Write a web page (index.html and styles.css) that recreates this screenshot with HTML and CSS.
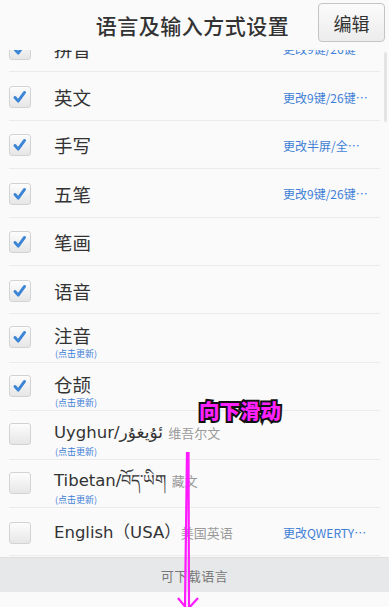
FILE: index.html
```html
<!DOCTYPE html>
<html lang="zh">
<head>
<meta charset="utf-8">
<link rel="stylesheet" href="styles.css">
</head>
<body>
<div class="page">
  <header class="topbar">
    <span></span>
    <h1 class="title">语言及输入方式设置</h1>
    <button class="edit-btn">编辑</button>
  </header>
  <div class="list">
    <div class="row first">
      <span class="cb checked"><svg viewBox="0 0 22 22"><path d="M5.5 11.5 L9 15.5 L16 6" /></svg></span>
      <div class="label"><div class="main">拼音</div></div>
      <span class="action">更改9键/26键…</span>
    </div>
    <div class="row">
      <span class="cb checked"><svg viewBox="0 0 22 22"><path d="M5.5 11.5 L9 15.5 L16 6" /></svg></span>
      <div class="label"><div class="main">英文</div></div>
      <span class="action">更改9键/26键…</span>
    </div>
    <div class="row">
      <span class="cb checked"><svg viewBox="0 0 22 22"><path d="M5.5 11.5 L9 15.5 L16 6" /></svg></span>
      <div class="label"><div class="main">手写</div></div>
      <span class="action">更改半屏/全…</span>
    </div>
    <div class="row">
      <span class="cb checked"><svg viewBox="0 0 22 22"><path d="M5.5 11.5 L9 15.5 L16 6" /></svg></span>
      <div class="label"><div class="main">五笔</div></div>
      <span class="action">更改9键/26键…</span>
    </div>
    <div class="row">
      <span class="cb checked"><svg viewBox="0 0 22 22"><path d="M5.5 11.5 L9 15.5 L16 6" /></svg></span>
      <div class="label"><div class="main">笔画</div></div>
    </div>
    <div class="row">
      <span class="cb checked"><svg viewBox="0 0 22 22"><path d="M5.5 11.5 L9 15.5 L16 6" /></svg></span>
      <div class="label"><div class="main">语音</div></div>
    </div>
    <div class="row sub">
      <span class="cb checked"><svg viewBox="0 0 22 22"><path d="M5.5 11.5 L9 15.5 L16 6" /></svg></span>
      <div class="label"><div class="main">注音</div><div class="note">(点击更新)</div></div>
    </div>
    <div class="row sub">
      <span class="cb checked"><svg viewBox="0 0 22 22"><path d="M5.5 11.5 L9 15.5 L16 6" /></svg></span>
      <div class="label"><div class="main">仓颉</div><div class="note">(点击更新)</div></div>
    </div>
    <div class="row sub">
      <span class="cb"></span>
      <div class="label"><div class="main latin">Uyghur/<span class="ar">ئۇيغۇر</span> <span class="gray">维吾尔文</span></div><div class="note">(点击更新)</div></div>
    </div>
    <div class="row sub">
      <span class="cb"></span>
      <div class="label"><div class="main latin">Tibetan/<span class="tb">བོད་ཡིག</span> <span class="gray">藏文</span></div><div class="note">(点击更新)</div></div>
    </div>
    <div class="row">
      <span class="cb"></span>
      <div class="label"><div class="main latin">English（USA）<span class="gray">美国英语</span></div></div>
      <span class="action">更改QWERTY…</span>
    </div>
    <div class="band">可下载语言</div>
    <div class="row last"></div>
  </div>
  <div class="scrollbar"></div>
  <div class="hint">向下滑动</div>
  <svg class="arrow" viewBox="0 0 40 170" width="40" height="170">
    <path d="M20 10 L18 165 M21.5 10 L22 165 M11 156 L20 167 M31 156 L21 167" />
  </svg>
</div>
</body>
</html>
```

FILE: styles.css
```css
* { box-sizing: border-box; }
html, body { margin: 0; padding: 0; }
body {
  width: 389px;
  height: 607px;
  overflow: hidden;
  background: #fafafa;
  font-family: "Noto Sans CJK SC", "Noto Sans", sans-serif;
  color: #333;
}
.page {
  position: relative;
  width: 389px;
  height: 607px;
  overflow: hidden;
}
.topbar {
  position: relative;
  z-index: 2;
  height: 50px;
  display: grid;
  grid-template-columns: 1fr auto 1fr;
  align-items: center;
  background: #fafafa;
  padding-right: 4px;
}
.title {
  margin: 0;
  font-size: 21px;
  font-weight: 500;
  color: #333;
  letter-spacing: 0.5px;
}
.edit-btn {
  justify-self: end;
  width: 67px;
  height: 39px;
  margin-top: -5px;
  border: 1px solid #c4c4c4;
  border-radius: 4px;
  background: linear-gradient(#fbfbfb, #ececec);
  font-family: inherit;
  font-size: 18px;
  color: #333;
  padding: 0;
}
.list {
  position: relative;
  z-index: 1;
}
.row {
  height: 48.4px;
  display: flex;
  align-items: center;
  padding-left: 9px;
  padding-right: 12px;
  border-bottom: 1px solid transparent;
  background-image: linear-gradient(#ebebeb, #ebebeb);
  background-repeat: no-repeat;
  background-size: 371px 1px;
  background-position: 9px 100%;
}
.row.first { margin-top: -25px; }
.row.sub { align-items: flex-start; padding-top: 11px; }
.cb {
  flex: none;
  width: 22px;
  height: 22px;
  border: 1px solid #d3d3d3;
  border-radius: 3px;
  background: linear-gradient(#fdfdfd, #e6e6e6);
  display: flex;
  align-items: center;
  justify-content: center;
}
.cb svg { width: 20px; height: 20px; display: none; }
.cb.checked svg { display: block; }
.cb path {
  fill: none;
  stroke: #3b84d6;
  stroke-width: 3.2;
  stroke-linecap: round;
  stroke-linejoin: round;
}
.label {
  flex: 1;
  margin-left: 23px;
  min-width: 0;
}
.main {
  font-size: 18.5px;
  line-height: 20px;
  color: #333;
  white-space: nowrap;
}
.row.sub .main { line-height: 18px; }
.main.latin {
  font-family: "DejaVu Sans", "Noto Sans CJK SC", sans-serif;
  font-size: 16.5px;
}
.ar { font-family: "DejaVu Sans", sans-serif; font-size: 17px; }
.tb { font-size: 16px; }
.gray {
  font-family: "Noto Sans CJK SC", sans-serif;
  font-size: 13px;
  color: #9a9a9a;
}
.note {
  margin-top: 4px;
  font-size: 9px;
  line-height: 12px;
  color: #3f7fd6;
  padding-left: 1px;
}
.action {
  flex: none;
  font-size: 12px;
  color: #3f7fd6;
  white-space: nowrap;
  margin-left: auto;
  width: 94px;
}
.band {
  height: 35px;
  background: #e7e8ea;
  border-top: 1px solid #dedfe1;
  display: flex;
  align-items: center;
  justify-content: center;
  font-size: 13px;
  color: #777;
  letter-spacing: 0.5px;
}
.row.last { background-image: none; }
.scrollbar {
  position: absolute;
  right: 2px;
  top: 52px;
  width: 3px;
  height: 70px;
  background: #e4e4e4;
  border-radius: 2px;
  z-index: 3;
}
.hint {
  position: absolute;
  z-index: 4;
  left: 199px;
  top: 397px;
  font-size: 20.5px;
  line-height: 26px;
  font-weight: 900;
  color: #ff22ff;
  -webkit-text-stroke: 4px #111;
  paint-order: stroke fill;
  letter-spacing: 0;
}
.arrow {
  position: absolute;
  z-index: 4;
  left: 167px;
  top: 442px;
}
.arrow path {
  fill: none;
  stroke: #ff1aff;
  stroke-width: 2.2;
}
```
